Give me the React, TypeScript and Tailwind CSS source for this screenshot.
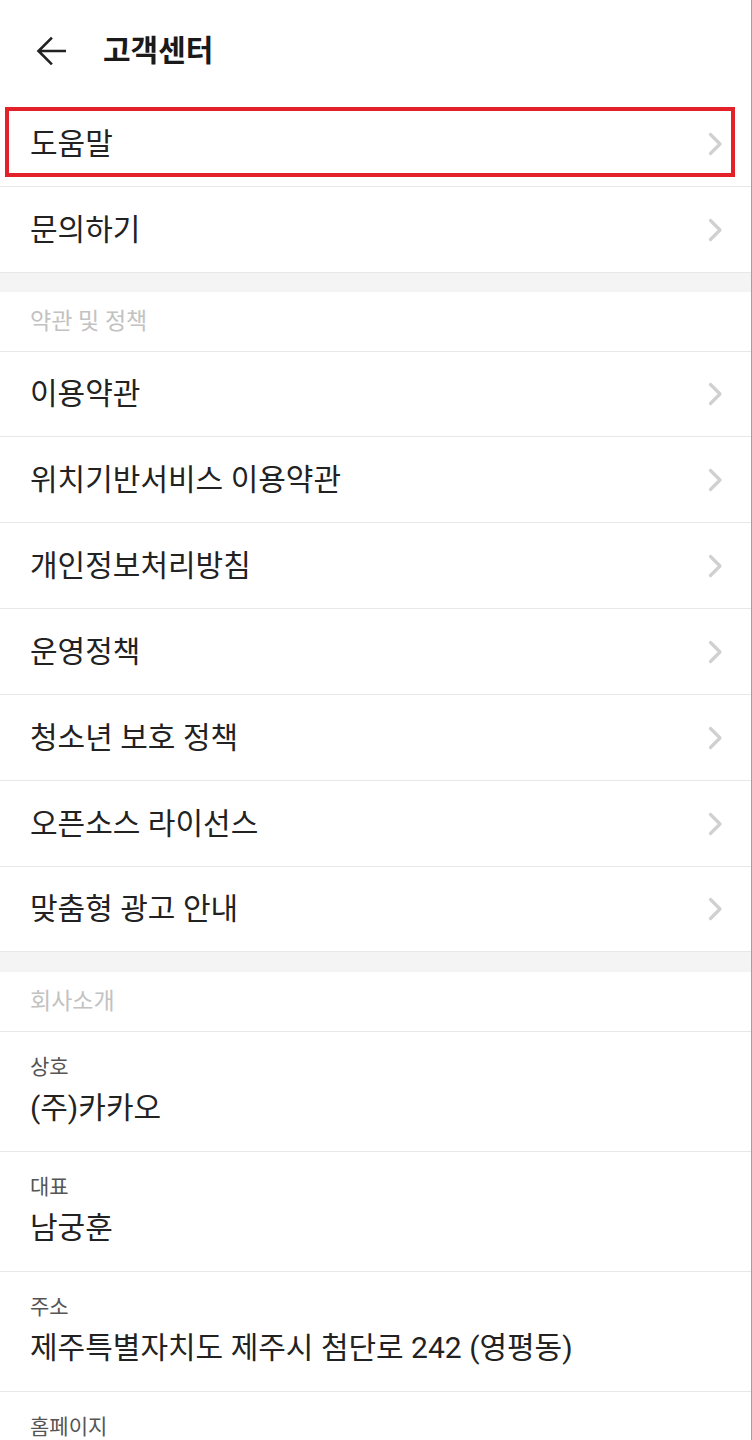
import React from "react";

const FONT = { fontFamily: 'Roboto, "Noto Sans CJK KR", "Noto Sans", sans-serif' };

function Chevron() {
  return (
    <svg width="16" height="24" viewBox="0 0 16 24" fill="none" className="shrink-0">
      <path d="M3.5 2.5 L13 12 L3.5 21.5" stroke="#d0d0d0" strokeWidth="3.2" strokeLinecap="round" strokeLinejoin="round" />
    </svg>
  );
}

function NavRow({ label, short }: { label: string; short?: boolean }) {
  return (
    <div
      className={
        short
          ? "flex h-[85px] items-center justify-between border-b border-[#e8e8e8] pl-[30px] pr-[28px]"
          : "flex h-[86px] items-center justify-between border-b border-[#e8e8e8] pl-[30px] pr-[28px]"
      }
    >
      <span className="text-[30px] leading-[40px] text-[#222222]">{label}</span>
      <Chevron />
    </div>
  );
}

function SectionHeader({ label }: { label: string }) {
  return (
    <div className="flex h-[60px] items-center border-b border-[#e8e8e8] pl-[30px]">
      <span className="text-[23px] leading-[28px] text-[#c2c2c2]">{label}</span>
    </div>
  );
}

function InfoRow({ label, value }: { label: string; value?: string }) {
  return (
    <div className="h-[120px] border-b border-[#e8e8e8] pl-[30px] pt-[20px]">
      <div className="text-[21px] leading-[30px] text-[#555555]">{label}</div>
      {value ? (
        <div className="mt-[6px] text-[30px] leading-[40px] text-[#222222]">{value}</div>
      ) : null}
    </div>
  );
}

export default function App() {
  return (
    <div className="relative h-[1440px] w-[752px] overflow-hidden bg-white" style={FONT}>
      <div className="border-r border-[#a0a0a0]">
        {/* Header */}
        <div className="flex h-[101px] items-center">
          <div className="ml-[36px] flex h-[30px] w-[30px] items-center justify-center">
            <svg width="30" height="30" viewBox="0 0 30 30" fill="none">
              <path d="M29 15 H3 M15 2.5 L2.5 15 L15 27.5" stroke="#222222" strokeWidth="2.6" strokeLinecap="square" strokeLinejoin="miter" />
            </svg>
          </div>
          <span className="ml-[37px] text-[30px] font-bold leading-[40px] text-[#1a1a1a]">고객센터</span>
        </div>

        <NavRow label="도움말" />
        <NavRow label="문의하기" />
        <div className="h-[19px] bg-[#f4f4f4]" />
        <SectionHeader label="약관 및 정책" />
        <NavRow label="이용약관" short />
        <NavRow label="위치기반서비스 이용약관" />
        <NavRow label="개인정보처리방침" />
        <NavRow label="운영정책" />
        <NavRow label="청소년 보호 정책" />
        <NavRow label="오픈소스 라이선스" />
        <NavRow label="맞춤형 광고 안내" short />
        <div className="h-[20px] bg-[#f4f4f4]" />
        <SectionHeader label="회사소개" />
        <InfoRow label="상호" value="(주)카카오" />
        <InfoRow label="대표" value="남궁훈" />
        <InfoRow label="주소" value="제주특별자치도 제주시 첨단로 242 (영평동)" />
        <InfoRow label="홈페이지" />
      </div>

      {/* Highlight annotation */}
      <div className="pointer-events-none absolute left-[5px] top-[107px] h-[70px] w-[730px] border-4 border-[#e32129]" />
    </div>
  );
}
